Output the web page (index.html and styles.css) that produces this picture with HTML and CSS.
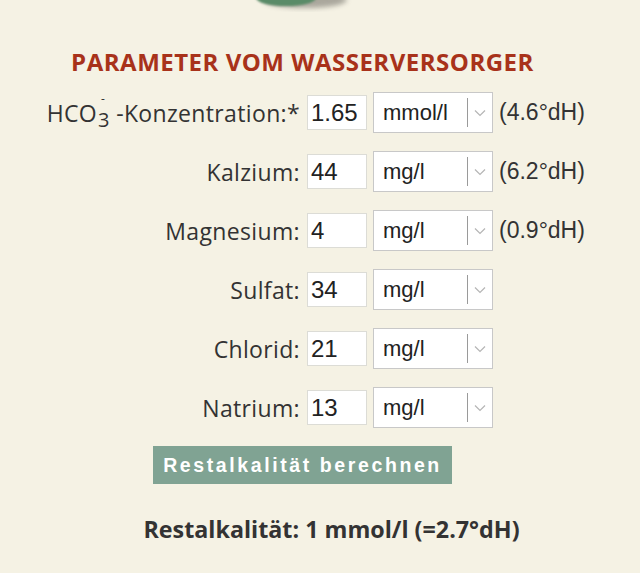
FILE: index.html
```html
<!DOCTYPE html>
<html lang="de">
<head>
<meta charset="utf-8">
<title>Restalkalität</title>
<link rel="stylesheet" href="styles.css">
</head>
<body>
<svg class="logo-edge" width="640" height="12" viewBox="0 0 640 12" aria-hidden="true">
  <defs>
    <filter id="blur1" x="-50%" y="-200%" width="200%" height="500%"><feGaussianBlur stdDeviation="2.5"/></filter>
    <filter id="blur2" x="-50%" y="-200%" width="200%" height="500%"><feGaussianBlur stdDeviation="1.2"/></filter>
  </defs>
  <ellipse cx="305" cy="0" rx="42" ry="8" fill="#6d6a63" opacity="0.55" filter="url(#blur1)"/>
  <ellipse cx="286" cy="-2" rx="30" ry="8" fill="#5a8b68" filter="url(#blur2)"/>
</svg>
<main class="page">
  <h2 class="title">PARAMETER VOM WASSERVERSORGER</h2>
  <form class="params">
    <div class="row">
      <label class="lbl" for="hco3">HCO<span class="ion">3<span class="charge">-</span></span> -Konzentration:*</label>
      <input class="num" id="hco3" type="text" value="1.65">
      <div class="unit"><select><option>mmol/l</option></select><span class="arrow"><svg width="12" height="8" viewBox="0 0 12 8"><path d="M1 1.5 L6 6.5 L11 1.5" fill="none" stroke="#b5b5b5" stroke-width="1.2"/></svg></span></div>
      <span class="note">(4.6°dH)</span>
    </div>
    <div class="row">
      <label class="lbl" for="ca">Kalzium:</label>
      <input class="num" id="ca" type="text" value="44">
      <div class="unit"><select><option>mg/l</option></select><span class="arrow"><svg width="12" height="8" viewBox="0 0 12 8"><path d="M1 1.5 L6 6.5 L11 1.5" fill="none" stroke="#b5b5b5" stroke-width="1.2"/></svg></span></div>
      <span class="note">(6.2°dH)</span>
    </div>
    <div class="row">
      <label class="lbl" for="mg">Magnesium:</label>
      <input class="num" id="mg" type="text" value="4">
      <div class="unit"><select><option>mg/l</option></select><span class="arrow"><svg width="12" height="8" viewBox="0 0 12 8"><path d="M1 1.5 L6 6.5 L11 1.5" fill="none" stroke="#b5b5b5" stroke-width="1.2"/></svg></span></div>
      <span class="note">(0.9°dH)</span>
    </div>
    <div class="row">
      <label class="lbl" for="so4">Sulfat:</label>
      <input class="num" id="so4" type="text" value="34">
      <div class="unit"><select><option>mg/l</option></select><span class="arrow"><svg width="12" height="8" viewBox="0 0 12 8"><path d="M1 1.5 L6 6.5 L11 1.5" fill="none" stroke="#b5b5b5" stroke-width="1.2"/></svg></span></div>
    </div>
    <div class="row">
      <label class="lbl" for="cl">Chlorid:</label>
      <input class="num" id="cl" type="text" value="21">
      <div class="unit"><select><option>mg/l</option></select><span class="arrow"><svg width="12" height="8" viewBox="0 0 12 8"><path d="M1 1.5 L6 6.5 L11 1.5" fill="none" stroke="#b5b5b5" stroke-width="1.2"/></svg></span></div>
    </div>
    <div class="row">
      <label class="lbl" for="na">Natrium:</label>
      <input class="num" id="na" type="text" value="13">
      <div class="unit"><select><option>mg/l</option></select><span class="arrow"><svg width="12" height="8" viewBox="0 0 12 8"><path d="M1 1.5 L6 6.5 L11 1.5" fill="none" stroke="#b5b5b5" stroke-width="1.2"/></svg></span></div>
    </div>
    <div class="actions">
      <button type="button" class="btn">Restalkalität berechnen</button>
    </div>
  </form>
  <p class="result">Restalkalität: 1 mmol/l (=2.7°dH)</p>
</main>
</body>
</html>
```
FILE: styles.css
```css
html, body {
  margin: 0;
  padding: 0;
  background: #f5f2e4;
}
body {
  font-family: "Open Sans", "DejaVu Sans", sans-serif;
  color: #333;
  overflow: hidden;
}
.logo-edge {
  display: block;
}
.page {
  width: 605px;
}
.title {
  margin: 34px 0 0;
  text-align: center;
  font-size: 24px;
  line-height: 32px;
  font-weight: 700;
  color: #a8321a;
  letter-spacing: 0.5px;
}
.params {
  margin-top: 14px;
}
.row {
  display: flex;
  align-items: center;
  height: 41px;
  margin-bottom: 18px;
}
.lbl {
  width: 300px;
  flex: none;
  text-align: right;
  font-size: 23px;
  letter-spacing: 0.35px;
  color: #333;
}
.ion {
  position: relative;
  display: inline-block;
  font-size: 20px;
  transform: translateY(5px);
  margin-left: 1px;
}
.charge {
  position: absolute;
  left: 3px;
  top: -13px;
  font-size: 12px;
  line-height: 12px;
}
.num {
  box-sizing: border-box;
  width: 60px;
  height: 35px;
  margin: 0 0 0 7px;
  padding: 0 3px;
  border: 1px solid #dcdcd6;
  background: #fff;
  font-family: "Liberation Sans", Arial, sans-serif;
  font-size: 24px;
  color: #222;
  outline: none;
}
.unit {
  position: relative;
  width: 120px;
  height: 41px;
  margin-left: 6px;
  flex: none;
}
.unit select {
  -webkit-appearance: none;
  appearance: none;
  box-sizing: border-box;
  width: 120px;
  height: 41px;
  margin: 0;
  padding: 0 0 0 9px;
  border: 1px solid #c8c8c8;
  border-radius: 0;
  background: #fff;
  font-family: "Liberation Sans", Arial, sans-serif;
  font-size: 22px;
  color: #222;
}
.arrow {
  position: absolute;
  right: 1px;
  top: 6px;
  bottom: 6px;
  width: 24px;
  border-left: 1px solid #9a9a9a;
  display: flex;
  align-items: center;
  justify-content: center;
  pointer-events: none;
}
.note {
  margin-left: 6px;
  font-family: "Liberation Sans", Arial, sans-serif;
  font-size: 23px;
  color: #333;
}
.actions {
  text-align: center;
  margin-top: 14px;
}
.btn {
  box-sizing: border-box;
  height: 38px;
  width: 299px;
  padding: 0;
  border: none;
  background: #80a393;
  color: #fff;
  font-family: "Liberation Sans", Arial, sans-serif;
  font-size: 19.5px;
  font-weight: 700;
  letter-spacing: 2.6px;
}
.result {
  margin: 29px 0 0;
  padding-left: 58px;
  text-align: center;
  font-size: 23.3px;
  font-weight: 700;
  color: #333;
}
```
